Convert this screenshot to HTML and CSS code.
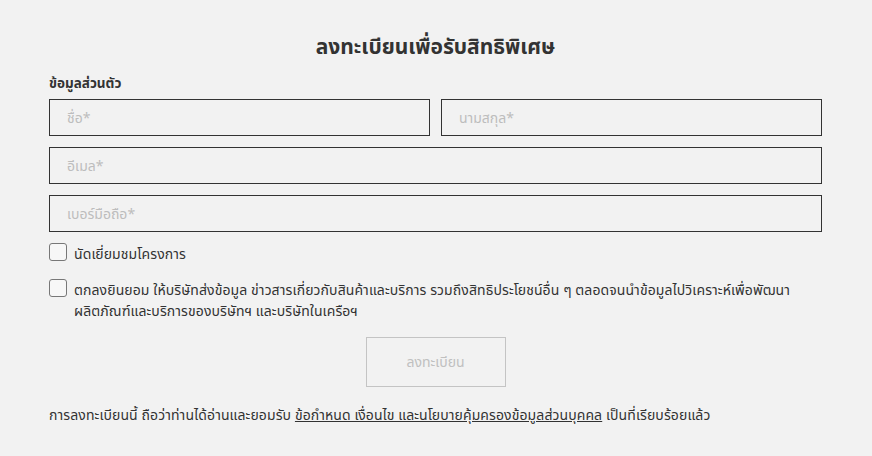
FILE: index.html
```html
<!DOCTYPE html>
<html lang="th">
  <head>
    <meta charset="UTF-8" />
    <meta name="viewport" content="width=device-width, initial-scale=1.0" />
    <title>ลงทะเบียน</title>
    <link rel="stylesheet" href="styles.css">
  </head>
  <body>
    <div class="container">
      <h2>ลงทะเบียนเพื่อรับสิทธิพิเศษ</h2>
      <form id="registerForm">
        <div class="section-title">ข้อมูลส่วนตัว</div>
        <div class="row">
          <input type="text" name="firstname" placeholder="ชื่อ*" />
          <input type="text" name="lastname" placeholder="นามสกุล*" />
        </div>
        <div class="row">
          <input type="text" name="email" placeholder="อีเมล*" />
        </div>
        <div class="row">
          <input type="text" name="phone" placeholder="เบอร์มือถือ*" />
        </div>
        <label class="check visit">
          <span class="box"></span>
          <span>นัดเยี่ยมชมโครงการ</span>
        </label>
        <label class="check consent">
          <span class="box"></span>
          <span>ตกลงยินยอม ให้บริษัทส่งข้อมูล ข่าวสารเกี่ยวกับสินค้าและบริการ รวมถึงสิทธิประโยชน์อื่น ๆ ตลอดจนนำข้อมูลไปวิเคราะห์เพื่อพัฒนา<br>ผลิตภัณฑ์และบริการของบริษัทฯ และบริษัทในเครือฯ</span>
        </label>
        <div class="actions">
          <button type="submit" disabled>ลงทะเบียน</button>
        </div>
        <p class="terms">
          การลงทะเบียนนี้ ถือว่าท่านได้อ่านและยอมรับ
          <a href="#">ข้อกำหนด เงื่อนไข และนโยบายคุ้มครองข้อมูลส่วนบุคคล</a>
          เป็นที่เรียบร้อยแล้ว
        </p>
      </form>
    </div>
  </body>
</html>
```

FILE: styles.css
```css
body {
  font-family: "Noto Sans", "Noto Sans Thai", "DejaVu Sans", sans-serif;
  background-color: #f2f2f2;
  color: #333;
  margin: 0;
  padding: 0;
}
.container {
  width: 773px;
  margin: 0 50px 0 49px;
  padding-top: 30px;
}
h2 {
  text-align: center;
  font-size: 21px;
  font-weight: bold;
  color: #333;
  margin: 0 0 12px;
  line-height: 32px;
}
.section-title {
  font-size: 13.5px;
  font-weight: bold;
  line-height: 18px;
  margin-bottom: 7px;
}
.row {
  display: flex;
  gap: 11px;
  margin-bottom: 11px;
}
.row input {
  flex: 1;
  min-width: 0;
  box-sizing: border-box;
  height: 37px;
  padding: 0 17px;
  border: 1px solid #333;
  background: transparent;
  font-family: inherit;
  font-size: 14px;
  color: #333;
}
.row input::placeholder {
  color: #bdbdbd;
}
.check {
  display: flex;
  align-items: flex-start;
  gap: 7px;
  font-size: 14px;
  line-height: 21px;
  letter-spacing: 0.1px;
  color: #333;
}
.check .box {
  flex: none;
  box-sizing: border-box;
  width: 18px;
  height: 18px;
  border: 1px solid #777;
  border-radius: 3px;
  background: #f7f7f7;
}
.consent {
  margin-top: 15px;
}
.actions {
  display: flex;
  justify-content: center;
  margin-top: 16px;
}
button {
  width: 140px;
  height: 50px;
  border: 1px solid #c4c4c4;
  background: transparent;
  color: #c0c0c0;
  font-family: inherit;
  font-size: 14px;
}
.terms {
  font-size: 14px;
  margin: 18px 0 0;
  line-height: 20px;
  letter-spacing: 0.1px;
}
.terms a {
  color: #333;
}
```
